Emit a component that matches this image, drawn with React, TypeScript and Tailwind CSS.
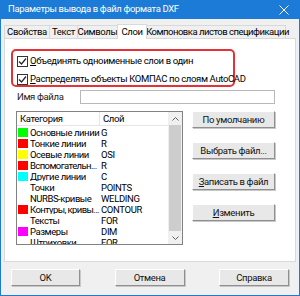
import React from 'react';

const font = "font-['Roboto','Liberation_Sans',sans-serif]";

const rows: { name: string; layer: string; color?: string; tight?: boolean }[] = [
  { name: 'Основные линии', layer: 'G', color: 'bg-[#00ff00]' },
  { name: 'Тонкие линии', layer: 'R', color: 'bg-[#ff0000]' },
  { name: 'Осевые линии', layer: 'OSI', color: 'bg-[#ffff00]' },
  { name: 'Вспомогательн...', layer: 'R', color: 'bg-[#ff0000]', tight: true },
  { name: 'Другие линии', layer: 'C', color: 'bg-[#00ffff]' },
  { name: 'Точки', layer: 'POINTS' },
  { name: 'NURBS-кривые', layer: 'WELDING' },
  { name: 'Контуры, кривы...', layer: 'CONTOUR', color: 'bg-[#ff0000]', tight: true },
  { name: 'Тексты', layer: 'FOR' },
  { name: 'Размеры', layer: 'DIM', color: 'bg-[#ff00ff]' },
  { name: 'Штриховки', layer: 'FOR' },
];

const tabs = [
  { label: 'Свойства', w: 'w-[46px]' },
  { label: 'Текст', w: 'w-[29px]' },
  { label: 'Символы', w: 'w-[41px]' },
  { label: 'Слои', w: 'w-[30px]', active: true },
  { label: 'Компоновка листов спецификации', w: 'w-[140px] tracking-[-0.5px] pl-[3px]' },
];

const Check = ({ label }: { label: React.ReactNode }) => (
  <div className="flex items-center h-[18px] whitespace-nowrap">
    <div className="w-[11px] h-[11px] border border-[#333] bg-white flex items-center justify-center mr-[2px]">
      <svg width="9" height="9" viewBox="0 0 9 9">
        <path d="M1 4.5 L3.5 7 L8 1.5" fill="none" stroke="#222" strokeWidth="1.2" />
      </svg>
    </div>
    <span>{label}</span>
  </div>
);

const Btn = ({ children, w }: { children: React.ReactNode; w: string }) => (
  <button className={`${w} h-[17px] bg-[#e8e8e8] border-t border-l border-t-[#ffffff] border-l-[#ffffff] border-r border-b border-r-[#8f8f8f] border-b-[#8f8f8f] shadow-[1px_1px_0_#c8c8c8] leading-none text-[#111] flex items-center justify-center whitespace-nowrap`}>
    {children}
  </button>
);

export default function App() {
  return (
    <div className={`w-[300px] h-[296px] bg-[#f0f0f0] border border-[#1c7bd6] border-t-0 flex flex-col text-[9.5px] tracking-[-0.35px] text-black ${font}`}>
      {/* title bar */}
      <div className="h-[19px] bg-[#1c7bd6] text-white flex items-center justify-between pl-[7px] pr-[10px] shrink-0">
        <span className="whitespace-nowrap">Параметры вывода в файл формата DXF</span>
        <svg width="10" height="10" viewBox="0 0 10 10">
          <path d="M0.5 0.5 L9.5 9.5 M9.5 0.5 L0.5 9.5" stroke="#fff" strokeWidth="1" />
        </svg>
      </div>

      {/* tabs */}
      <div className="flex items-end pl-[3px] mt-[6px] h-[13px] relative z-10">
        {tabs.map((t) =>
          t.active ? (
            <div key={t.label} className={`${t.w} h-[15px] bg-white border border-[#d9d9d9] border-b-0 flex items-center justify-center leading-none -mb-[1px] -ml-[1px] whitespace-nowrap relative z-10`}>
              {t.label}
            </div>
          ) : (
            <div key={t.label} className={`${t.w} h-[13px] bg-[#f0f0f0] border border-[#d9d9d9] border-b-0 -ml-[1px] first:ml-0 flex items-center justify-center leading-none whitespace-nowrap`}>
              {t.label}
            </div>
          )
        )}
      </div>

      {/* panel */}
      <div className="mx-[3px] h-[224px] bg-white border border-[#d9d9d9] relative pt-[10px] pl-[6px]">
        <div className="w-[224px] h-[38px] border-2 border-[#e53237] rounded-[5px] pl-[4px] pt-[1px]">
          <Check label={<><u>О</u>бъединять одноименные слои в один</>} />
          <Check label={<><u>Р</u>аспределять объекты КОМПАС по слоям AutoCAD</>} />
        </div>

        <div className="flex items-center mt-[3px] h-[14px]">
          <span className="w-[69px] pl-[6px] text-[#222] whitespace-nowrap">Имя файла</span>
          <div className="w-[195px] h-[14px] bg-white border border-[#b8b8b8]" />
        </div>

        <div className="flex mt-[7px]">
          {/* list */}
          <div className="ml-[5px] w-[167px] h-[134px] border border-[#828282] flex bg-white">
            <div className="flex-1 flex flex-col overflow-hidden">
              <div className="flex h-[14px] border-b border-[#e5e5e5] leading-[13px] shrink-0 whitespace-nowrap">
                <div className="w-[83px] border-r border-[#e5e5e5] pl-[3px]">Категория</div>
                <div className="pl-[3px]">Слой</div>
              </div>
              <div className="pt-[1px]">
                {rows.map((r) => (
                  <div key={r.name} className="flex items-center h-[11px] whitespace-nowrap">
                    <div className={`w-[10px] h-[9px] ml-[1px] mr-[2px] shrink-0 ${r.color ?? ''}`} />
                    <div className={`w-[70px] overflow-hidden leading-none shrink-0 ${r.tight ? 'tracking-[-0.6px]' : 'tracking-[-0.45px]'}`}>{r.name}</div>
                    <div className="pl-[1px] leading-none">{r.layer}</div>
                  </div>
                ))}
              </div>
            </div>
            {/* scrollbar */}
            <div className="w-[14px] bg-[#f0f0f0] flex flex-col items-center">
              <div className="h-[13px] w-full flex items-center justify-center">
                <svg width="7" height="4" viewBox="0 0 7 4">
                  <path d="M0.5 3.5 L3.5 0.5 L6.5 3.5" fill="none" stroke="#606060" />
                </svg>
              </div>
              <div className="flex-1 w-[12px] bg-[#cdcdcd] mx-auto" />
              <div className="h-[13px] w-full flex items-center justify-center">
                <svg width="7" height="4" viewBox="0 0 7 4">
                  <path d="M0.5 0.5 L3.5 3.5 L6.5 0.5" fill="none" stroke="#606060" />
                </svg>
              </div>
            </div>
          </div>

          {/* buttons */}
          <div className="ml-[9px] flex flex-col gap-[14px]">
            <Btn w="w-[83px]">По умолчанию</Btn>
            <Btn w="w-[83px]">Выбрать файл...</Btn>
            <Btn w="w-[83px]"><span><u>З</u>аписать в файл</span></Btn>
            <Btn w="w-[83px]"><span><u>И</u>зменить</span></Btn>
          </div>
        </div>
      </div>

      {/* bottom buttons */}
      <div className="flex justify-between px-[10px] mt-[7px]">
        <Btn w="w-[69px]">OK</Btn>
        <Btn w="w-[70px]">Отмена</Btn>
        <Btn w="w-[70px]">Справка</Btn>
      </div>
    </div>
  );
}
